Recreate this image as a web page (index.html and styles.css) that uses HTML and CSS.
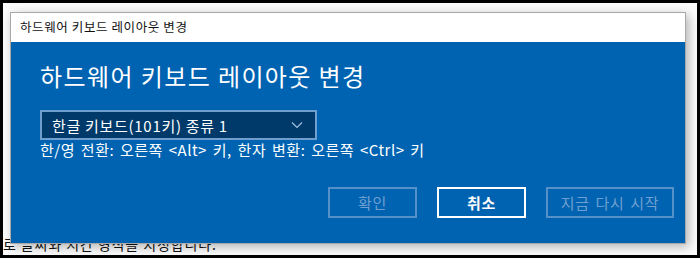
FILE: index.html
```html
<!DOCTYPE html>
<html>
  <head>
    <meta charset="UTF-8">
    <title>하드웨어 키보드 레이아웃 변경</title>
    <link rel="stylesheet" href="styles.css">
  </head>
  <body>
    <div class="screen">
      <p class="behind">로 글씨와 시간 형식을 지정합니다.</p>

      <div class="dialog">
        <div class="titlebar">하드웨어 키보드 레이아웃 변경</div>
        <div class="content">
          <h1 class="heading">하드웨어 키보드 레이아웃 변경</h1>
          <div class="select">
            <span>한글 키보드(101키) 종류 1</span>
            <svg class="chevron" width="12" height="8" viewBox="0 0 12 8">
              <path d="M1 1.5 L6 6.5 L11 1.5" fill="none" stroke="#9fc0e0" stroke-width="1.2"/>
            </svg>
          </div>
          <p class="info">한/영 전환: 오른쪽 &lt;Alt&gt; 키, 한자 변환: 오른쪽 &lt;Ctrl&gt; 키</p>
          <div class="buttons">
            <button class="btn disabled">확인</button>
            <button class="btn primary">취소</button>
            <button class="btn disabled wide">지금 다시 시작</button>
          </div>
        </div>
      </div>
    </div>
  </body>
</html>
```

FILE: styles.css
```css
* {
  box-sizing: border-box;
}

body {
  margin: 0;
  font-family: "Noto Sans CJK KR", "Noto Sans", sans-serif;
}

.screen {
  position: relative;
  width: 700px;
  height: 258px;
  border: 3px solid #000;
  background-color: #fbfbfb;
  overflow: hidden;
}

.behind {
  margin: 0;
  padding-top: 231px;
  font-size: 14px;
  line-height: 20px;
  letter-spacing: 0.9px;
  color: #111;
}

.dialog {
  position: absolute;
  left: 7px;
  top: 9px;
  width: 676px;
  height: 232px;
  border: 1px solid #a8a8a8;
  background-color: #0063b1;
  box-shadow: 3px 3px 10px rgba(0,0,0,0.28);
}

.titlebar {
  height: 29px;
  padding-left: 9px;
  background-color: #fff;
  color: #111;
  font-size: 12.5px;
  line-height: 27px;
  letter-spacing: 0.6px;
}

.content {
  padding: 18px 11px 0 29px;
  color: #fff;
}

.heading {
  margin: 0 0 18px 0;
  font-size: 24px;
  font-weight: 400;
  line-height: 32px;
  letter-spacing: 1.4px;
}

.select {
  display: flex;
  align-items: center;
  justify-content: space-between;
  width: 277px;
  height: 30px;
  padding: 0 12px 0 10px;
  border: 2px solid #6f9fcf;
  background-color: #003a6b;
  font-size: 15px;
  letter-spacing: 0.7px;
}

.chevron {
  display: block;
}

.info {
  margin: 0;
  font-size: 15px;
  line-height: 20px;
  letter-spacing: 0.5px;
  word-spacing: 2px;
}

.buttons {
  display: flex;
  justify-content: flex-end;
  gap: 20px;
  margin-top: 27px;
}

.btn {
  width: 89px;
  height: 31px;
  border: 2px solid #5590c8;
  background-color: transparent;
  color: #6f9fd0;
  font-family: inherit;
  font-size: 15px;
  letter-spacing: 0.6px;
  word-spacing: 2px;
  padding: 0;
}

.btn.primary {
  border-color: #fff;
  color: #fff;
  font-weight: 700;
}

.btn.wide {
  width: 128px;
}
```
